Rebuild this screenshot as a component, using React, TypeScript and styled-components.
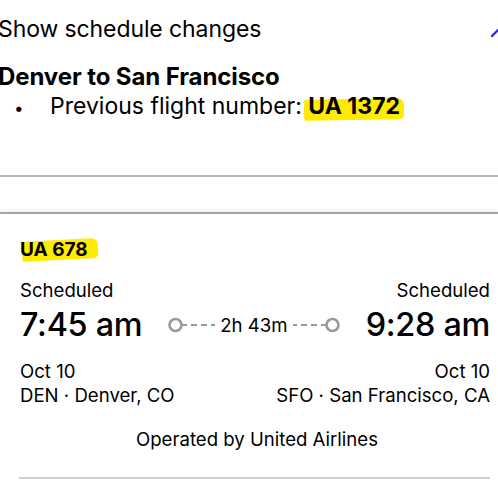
import React from "react";
import styled, { createGlobalStyle } from "styled-components";

const Global = createGlobalStyle`
  html, body { margin: 0; padding: 0; background: #fff; }
  body {
    font-family: Inter, "Noto Sans", "Liberation Sans", sans-serif;
    color: #000;
    overflow: hidden;
    width: 498px;
  }
`;

const Page = styled.div`
  width: 498px;
  display: flex;
  flex-direction: column;
`;

const ChangesSection = styled.section`
  margin-left: -2px;
  padding-top: 14px;
  display: flex;
  flex-direction: column;
  height: 175px;
  box-sizing: border-box;
`;

const ToggleRow = styled.div`
  display: flex;
  align-items: center;
  justify-content: space-between;
  height: 30px;
`;

const ToggleLabel = styled.span`
  font-size: 23px;
  font-weight: 400;
  line-height: 30px;
  letter-spacing: -0.1px;
`;

const Chevron = styled.svg`
  margin-right: -14px;
  margin-top: 4px;
`;

const RouteTitle = styled.h2`
  margin: 19px 0 0;
  font-size: 24px;
  font-weight: 700;
  line-height: 28px;
  letter-spacing: -0.1px;
`;

const ChangeList = styled.ul`
  list-style: none;
  margin: 1px 0 0;
  padding: 0;
`;

const ChangeItem = styled.li`
  display: flex;
  align-items: baseline;
  font-size: 23px;
  line-height: 28px;
`;

const Bullet = styled.span`
  width: 52px;
  padding-left: 16px;
  box-sizing: border-box;
  font-size: 17px;
`;

const Highlight = styled.span<{
  $tilt: number;
  $padL: number;
  $padR: number;
  $top: number;
  $bottom: number;
}>`
  position: relative;
  font-weight: 700;
  z-index: 0;
  &::before {
    content: "";
    position: absolute;
    left: ${(p) => -p.$padL}px;
    right: ${(p) => -p.$padR}px;
    top: ${(p) => p.$top}%;
    bottom: ${(p) => p.$bottom}%;
    background: #ffeb00;
    border-radius: 3px 6px 5px 2px;
    transform: rotate(${(p) => p.$tilt}deg);
    z-index: -1;
  }
`;

const Divider = styled.hr<{ $shade: string; $shadow?: boolean }>`
  margin: 0;
  border: 0;
  height: 2px;
  background: ${(p) => p.$shade};
  box-shadow: ${(p) => (p.$shadow ? "0 -2px 3px rgba(0,0,0,0.08)" : "none")};
`;

const Gap = styled.div`
  height: 35px;
`;

const FlightCard = styled.section`
  padding: 24px 8px 0 20px;
  display: flex;
  flex-direction: column;
`;

const FlightNo = styled.div`
  font-size: 19px;
  font-weight: 700;
  line-height: 24px;
  align-self: flex-start;
`;

const TimesGrid = styled.div`
  margin-top: 17px;
  display: grid;
  grid-template-columns: auto 1fr auto;
  align-items: end;
`;

const Cell = styled.div<{ $right?: boolean }>`
  display: flex;
  flex-direction: column;
  align-items: ${(p) => (p.$right ? "flex-end" : "flex-start")};
`;

const Status = styled.div`
  font-size: 18.6px;
  line-height: 22px;
`;

const Time = styled.div`
  font-size: 32.4px;
  font-weight: 500;
  line-height: 38px;
  letter-spacing: -0.3px;
  margin-top: 5px;
`;

const Duration = styled.div`
  height: 38px;
  display: flex;
  align-items: center;
  justify-content: center;
  gap: 4px;
`;

const DurationText = styled.span`
  font-size: 18.6px;
  line-height: 22px;
`;

const Details = styled.div`
  margin-top: 16px;
  display: flex;
  justify-content: space-between;
`;

const DetailCol = styled.div<{ $right?: boolean }>`
  display: flex;
  flex-direction: column;
  gap: 2px;
  align-items: ${(p) => (p.$right ? "flex-end" : "flex-start")};
  font-size: 18.6px;
  line-height: 22px;
`;

const Operator = styled.div`
  margin-top: 22px;
  text-align: center;
  font-size: 18.6px;
  line-height: 22px;
  padding-left: 4px;
`;

const BottomRule = styled.hr`
  margin: 27px 0 0 -1px;
  border: 0;
  height: 2px;
  background: #cfcfcf;
`;

const Connector = ({ flip }: { flip?: boolean }) => (
  <svg
    width="48"
    height="16"
    viewBox="0 0 48 16"
    style={flip ? { transform: "scaleX(-1)" } : undefined}
  >
    <circle cx="7.5" cy="8" r="6" fill="none" stroke="#9a9a9a" strokeWidth="2.6" />
    <line x1="13" y1="8" x2="47" y2="8" stroke="#9a9a9a" strokeWidth="2" strokeDasharray="6 4" />
  </svg>
);

export default function App() {
  return (
    <Page>
      <Global />
      <ChangesSection>
        <ToggleRow>
          <ToggleLabel>Show schedule changes</ToggleLabel>
          <Chevron width="22" height="14" viewBox="0 0 22 14">
            <polyline
              points="2,12 11,3 20,12"
              fill="none"
              stroke="#2020dc"
              strokeWidth="2.2"
              strokeLinecap="round"
            />
          </Chevron>
        </ToggleRow>
        <RouteTitle>Denver to San Francisco</RouteTitle>
        <ChangeList>
          <ChangeItem>
            <Bullet>•</Bullet>
            <span>
              Previous flight number:{" "}
              <Highlight $tilt={-1} $padL={4} $padR={4} $top={24} $bottom={0}>
                UA 1372
              </Highlight>
            </span>
          </ChangeItem>
        </ChangeList>
      </ChangesSection>
      <Divider $shade="#b8b8b8" />
      <Gap />
      <Divider $shade="#a4a4a4" $shadow />
      <FlightCard>
        <FlightNo>
          <Highlight $tilt={-3} $padL={-2} $padR={10} $top={8} $bottom={6}>
            UA 678
          </Highlight>
        </FlightNo>
        <TimesGrid>
          <Cell>
            <Status>Scheduled</Status>
            <Time>7:45 am</Time>
          </Cell>
          <Duration>
            <Connector />
            <DurationText>2h 43m</DurationText>
            <Connector flip />
          </Duration>
          <Cell $right>
            <Status>Scheduled</Status>
            <Time>9:28 am</Time>
          </Cell>
        </TimesGrid>
        <Details>
          <DetailCol>
            <span>Oct 10</span>
            <span>DEN · Denver, CO</span>
          </DetailCol>
          <DetailCol $right>
            <span>Oct 10</span>
            <span>SFO · San Francisco, CA</span>
          </DetailCol>
        </Details>
        <Operator>Operated by United Airlines</Operator>
        <BottomRule />
      </FlightCard>
    </Page>
  );
}
